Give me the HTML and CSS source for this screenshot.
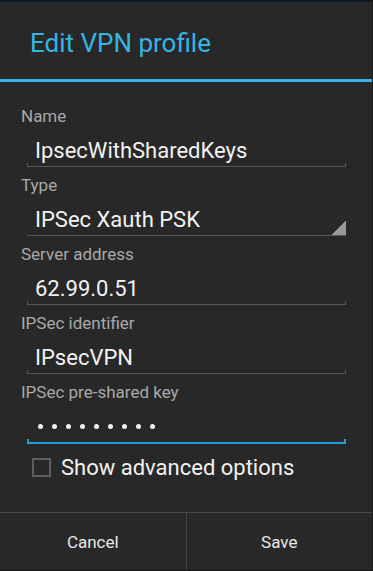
FILE: index.html
```html
<!DOCTYPE html>
<html>
<head>
  <link rel="stylesheet" href="styles.css">
</head>
<body>
<div class="dialog">
  <div class="title">Edit VPN profile</div>

  <div class="form">
    <div class="field">
      <div class="label">Name</div>
      <div class="box text">IpsecWithSharedKeys</div>
    </div>
    <div class="field">
      <div class="label">Type</div>
      <div class="box spinner">IPSec Xauth PSK</div>
    </div>
    <div class="field">
      <div class="label">Server address</div>
      <div class="box text">62.99.0.51</div>
    </div>
    <div class="field">
      <div class="label">IPSec identifier</div>
      <div class="box text">IPsecVPN</div>
    </div>
    <div class="field">
      <div class="label">IPSec pre-shared key</div>
      <div class="box text focused">
        <span class="dot"></span><span class="dot"></span><span class="dot"></span>
        <span class="dot"></span><span class="dot"></span><span class="dot"></span>
        <span class="dot"></span><span class="dot"></span><span class="dot"></span>
      </div>
    </div>

    <div class="check">
      <span class="checkbox"></span>
      <span>Show advanced options</span>
    </div>
  </div>

  <div class="buttons">
    <div class="btn">Cancel</div>
    <div class="btn">Save</div>
  </div>
</div>
</body>
</html>
```

FILE: styles.css
```css
html, body {
  margin: 0;
  padding: 0;
  background: #111;
}
body {
  font-family: Roboto, "Liberation Sans", sans-serif;
}
.dialog {
  width: 372px;
  height: 569px;
  background: #282828;
  border-top: 2px solid #0f1820;
  border-right: 1px solid #1c1c1c;
  display: flex;
  flex-direction: column;
}

/* title */
.title {
  height: 30px;
  line-height: 30px;
  padding: 26px 0 21px 30px;
  font-size: 26px;
  color: #33b5e5;
  border-bottom: 3px solid #33b5e5;
}

/* fields */
.form {
  padding: 24px 26px 0 21px;
}
.field {
  margin-bottom: 8px;
}
.label {
  font-size: 17px;
  line-height: 20px;
  color: #a9a9a9;
}
.box {
  margin: 9px 0 0 6px;
  height: 31px;
  line-height: 31px;
  padding-left: 8px;
  font-size: 22px;
  color: #f2f2f2;
  border-bottom: 1px solid #565656;
}
.box.text {
  background:
    linear-gradient(#565656, #565656) left bottom / 1px 3px no-repeat,
    linear-gradient(#565656, #565656) right bottom / 1px 3px no-repeat;
}
.box.spinner {
  background: linear-gradient(to bottom right, transparent 50%, #9a9a9a 50%) right bottom / 15px 14px no-repeat;
}
.box.focused {
  border-bottom: 2px solid #1f9fd2;
  display: flex;
  align-items: center;
  gap: 9px;
  padding-left: 11px;
  background:
    linear-gradient(#1f9fd2, #1f9fd2) left bottom / 2px 3px no-repeat,
    linear-gradient(#1f9fd2, #1f9fd2) right bottom / 2px 3px no-repeat;
}
.dot {
  width: 5px;
  height: 5px;
  border-radius: 50%;
  background: #f2f2f2;
}

/* checkbox */
.check {
  display: flex;
  align-items: center;
  height: 30px;
  margin-top: 7px;
  padding-left: 11px;
  font-size: 22px;
  color: #f2f2f2;
}
.checkbox {
  width: 15px;
  height: 15px;
  border: 2px solid #5e5e5e;
  margin-right: 10px;
}

/* buttons */
.buttons {
  margin-top: auto;
  display: flex;
  height: 57px;
  border-top: 1px solid #4a4a4a;
  border-bottom: 1px solid #151515;
}
.btn {
  flex: 1;
  display: flex;
  align-items: center;
  justify-content: center;
  font-size: 17px;
  color: #e8e8e8;
}
.btn + .btn {
  border-left: 1px solid #444;
}
```
